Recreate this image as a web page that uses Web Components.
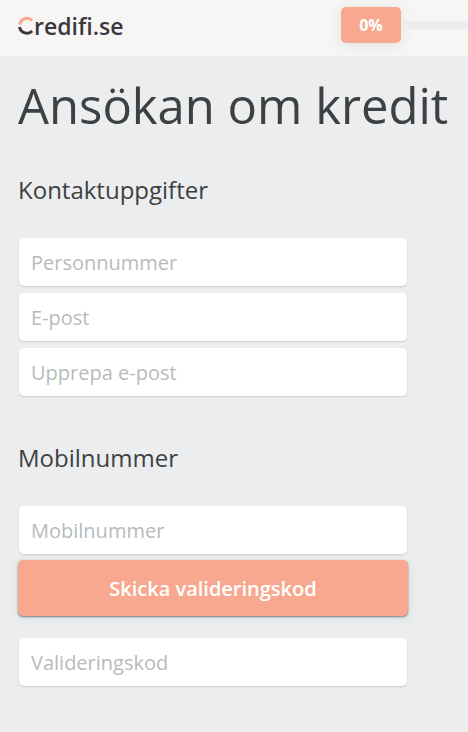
<!DOCTYPE html>
<html lang="sv">
<head>
<meta charset="utf-8">
<meta name="viewport" content="width=device-width, initial-scale=1">
<title>Ansökan om kredit</title>
<style>
  body {
    margin: 0;
    min-height: 100vh;
    background: #ebedee;
    color: #3e4143;
    font-family: "Open Sans", "Noto Sans", sans-serif;
    --accent: #f8a88f;
    --bar: #f7f6f4;
    --ink: #3b3840;
  }
</style>
</head>
<body>
<credit-page></credit-page>
<script>
const define = (name, markup, setup) => {
  const template = document.createElement('template');
  template.innerHTML = markup;
  customElements.define(name, class extends HTMLElement {
    constructor() {
      super();
      this.attachShadow({ mode: 'open' }).append(template.content.cloneNode(true));
    }
    connectedCallback() {
      if (setup) setup(this, this.shadowRoot);
    }
  });
};

define('brand-logo', `
  <style>
    :host { display: block; }
    a { display: flex; align-items: center; padding-top: 2px; color: var(--ink); text-decoration: none; font-size: 23px; font-weight: 600; line-height: 32px; }
    svg { display: block; width: 16px; height: 20px; }
  </style>
  <a href="#" aria-label="Credifi.se">
    <svg viewBox="0 0 16 20" fill="none" stroke-width="3" aria-hidden="true">
      <path d="M1.8 8.6A7.4 7.4 0 0 1 14.2 4.4" stroke="#f8a88f"/>
      <path d="M1.6 11.1A7.4 7.4 0 0 0 14.2 15" stroke="#3b3840"/>
    </svg><span>redifi.se</span>
  </a>`);

define('step-progress', `
  <style>
    :host { display: flex; align-items: center; }
    .badge { flex: none; width: 60px; border-radius: 5px; background: var(--accent); color: #fff; font-size: 16px; font-weight: 700; line-height: 36px; text-align: center; box-shadow: 0 2px 14px rgba(90, 120, 125, .16); }
    .track { flex: 1; height: 8px; background: #ebedee; }
  </style>
  <div class="badge"><slot></slot></div>
  <div class="track"></div>`);

define('app-bar', `
  <style>
    :host { display: block; background: var(--bar); }
    header { display: flex; align-items: center; justify-content: space-between; height: 50px; padding: 0 0 6px 18px; }
    step-progress { flex: 0 0 127px; }
  </style>
  <header>
    <brand-logo></brand-logo>
    <step-progress><slot></slot></step-progress>
  </header>`);

define('text-field', `
  <style>
    :host { display: block; padding: 0 1px; }
    input { display: block; box-sizing: border-box; width: 100%; height: 48px; padding: 0 12px; border: 0; border-radius: 5px; background: #fff; color: #3e4143; font: 400 20px/28px "Open Sans", "Noto Sans", sans-serif; box-shadow: 0 1px 2px rgba(0, 0, 0, .14); }
    input::placeholder { color: #b7bbbd; opacity: 1; }
    input:focus { outline: 2px solid var(--accent); }
  </style>
  <input>`, (host, root) => {
    const input = root.querySelector('input');
    const label = host.getAttribute('label');
    input.placeholder = label;
    input.setAttribute('aria-label', label);
    input.type = host.getAttribute('type') || 'text';
  });

define('action-button', `
  <style>
    :host { display: block; }
    button { display: block; width: 100%; height: 56px; padding: 2px 12px 0; border: 0; border-radius: 5px; background: var(--accent); color: #fff; font: 600 20px/28px "Open Sans", "Noto Sans", sans-serif; box-shadow: 0 1px 2px rgba(40, 60, 65, .6), 0 2px 10px rgba(90, 130, 135, .12); cursor: pointer; }
  </style>
  <button type="button"><slot></slot></button>`);

define('form-section', `
  <style>
    :host { display: block; }
    h2 { margin: 0 0 32px; font-size: 24px; font-weight: 400; line-height: 32px; }
    .fields { display: flex; flex-direction: column; gap: 7px; max-width: 390px; }
  </style>
  <section>
    <h2></h2>
    <div class="fields"><slot></slot></div>
  </section>`, (host, root) => {
    root.querySelector('h2').textContent = host.getAttribute('heading');
  });

define('credit-page', `
  <style>
    :host { display: block; }
    main { padding: 16px 0 44px 18px; }
    h1 { margin: 0 0 35px; font-size: 49px; font-weight: 400; line-height: 67px; }
    form { display: flex; flex-direction: column; gap: 46px; }
    .send { margin-top: -1px; margin-bottom: 15px; }
  </style>
  <app-bar>0%</app-bar>
  <main>
    <h1>Ansökan om kredit</h1>
    <form>
      <form-section heading="Kontaktuppgifter">
        <text-field label="Personnummer"></text-field>
        <text-field label="E-post" type="email"></text-field>
        <text-field label="Upprepa e-post" type="email"></text-field>
      </form-section>
      <form-section heading="Mobilnummer">
        <text-field label="Mobilnummer" type="tel"></text-field>
        <action-button class="send">Skicka valideringskod</action-button>
        <text-field label="Valideringskod"></text-field>
      </form-section>
    </form>
  </main>`);
</script>
</body>
</html>
